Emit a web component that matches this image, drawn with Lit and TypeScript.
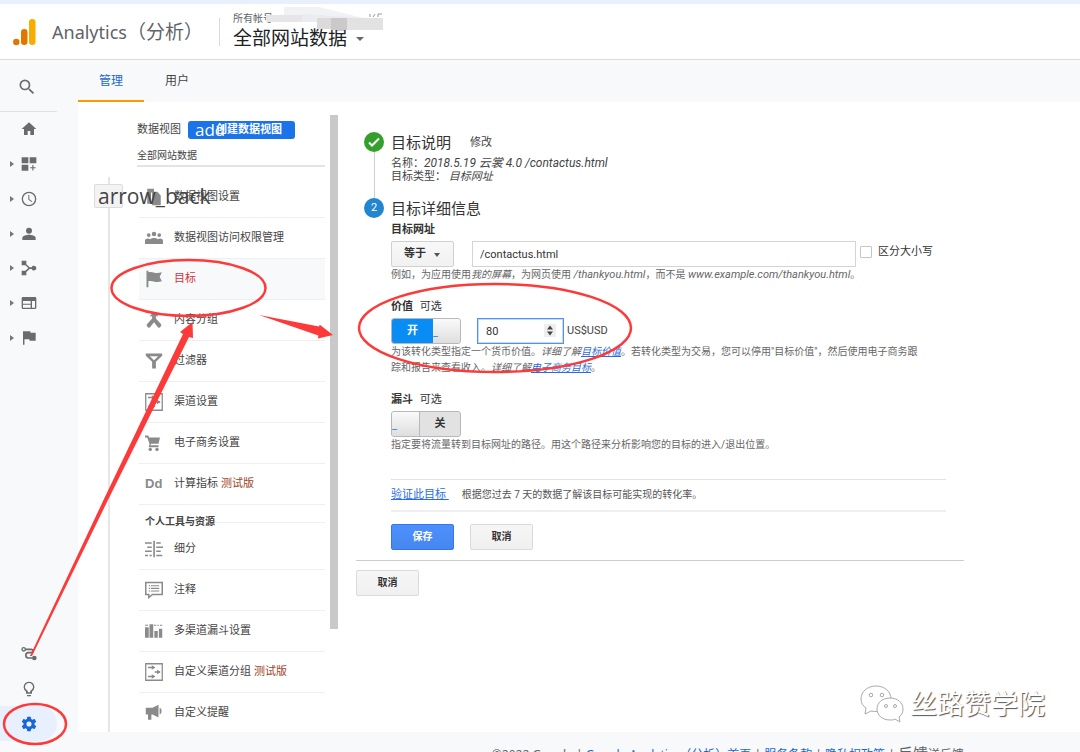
import { LitElement, html, css, svg, nothing } from "lit";
import { customElement, property } from "lit/decorators.js";

const icons: Record<string, unknown> = {
  search: svg`<path d="M15.5 14h-.79l-.28-.27A6.47 6.47 0 0 0 16 9.5 6.5 6.5 0 1 0 9.5 16c1.61 0 3.09-.59 4.23-1.57l.27.28v.79l5 4.99L20.49 19l-4.99-5zm-6 0C7.01 14 5 11.99 5 9.5S7.01 5 9.5 5 14 7.01 14 9.5 11.99 14 9.5 14z" />`,
  home: svg`<path d="M10 21v-6h4v6h5.500v-9H23L12 2 1 12h3.500v9z" />`,
  dashboard: svg`<path d="M1 2h10v9H1zM13 2h10v9H13zM1 13h10v9H1zM17 13.500h1.700v3.200h3.200v1.700h-3.200v3.200H17v-3.200h-3.200v-1.700H17z" />`,
  clock: svg`<path d="M12 1a11 11 0 1 0 0 22 11 11 0 0 0 0-22zm0 20a9 9 0 1 1 0-18 9 9 0 0 1 0 18zM12.5 6H11v7l5 3.500.8-1.300-4.300-2.900z" />`,
  person: svg`<circle cx="12" cy="7" r="4.500" /><path d="M2 21v-3c0-3.500 6.500-5 10-5s10 1.500 10 5v3z" />`,
  nodes: svg`<path d="M1 1h7v5.500l5 4.500h3a3.600 3.600 0 1 1 0 2.500h-3l-5 4.500V23H1v-7h5.500l4.500-4-4.500-4H1z" />`,
  card: svg`<path d="M21 3H3a2 2 0 0 0-2 2v14a2 2 0 0 0 2 2h18a2 2 0 0 0 2-2V5a2 2 0 0 0-2-2zM14.500 19H3v-4.200h11.500zm0-5.800H3V9h11.500zM21 19h-4.500V9H21z" />`,
  flag: svg`<path d="M14.400 4 14 2H3v20h2.200v-8h7.300l.4 2H22V4z" />`,
  route: svg`<path d="M6 5h9c4 0 4 5 0 5h-4c-5 0-5 8 0 8h6" fill="none" stroke="currentColor" stroke-width="2.500" /><circle cx="4" cy="5" r="2.500" fill="none" stroke="currentColor" stroke-width="2" /><circle cx="20" cy="18" r="3.500" />`,
  bulb: svg`<path d="M9 21h6v2H9zM12 1a8 8 0 0 0-4.500 14.600V19h9v-3.400A8 8 0 0 0 12 1zm2.700 13.200-.9.600V17h-3.600v-2.200l-.9-.600A6 6 0 1 1 14.700 14.200z" />`,
  gear: svg`<path transform="translate(-1.200 -1.200) scale(1.100)" d="M19.430 12.980c.04-.32.07-.64.07-.98s-.03-.66-.07-.98l2.110-1.650a.5.5 0 0 0 .12-.64l-2-3.460a.5.5 0 0 0-.61-.22l-2.490 1a7.300 7.300 0 0 0-1.690-.98l-.38-2.650A.49.49 0 0 0 14 2h-4a.49.49 0 0 0-.49.42l-.38 2.650c-.61.25-1.170.59-1.690.98l-2.490-1a.5.5 0 0 0-.61.22l-2 3.460a.5.5 0 0 0 .12.64l2.110 1.650c-.04.32-.07.65-.07.98s.03.66.07.98l-2.110 1.650a.5.5 0 0 0-.12.64l2 3.460c.12.22.39.3.61.22l2.490-1c.52.4 1.080.73 1.690.98l.38 2.650c.03.24.24.42.49.42h4c.25 0 .46-.18.49-.42l.38-2.650c.61-.25 1.170-.59 1.690-.98l2.490 1c.23.09.49 0 .61-.22l2-3.460a.5.5 0 0 0-.12-.64zM12 15.500a3.500 3.500 0 1 1 0-7 3.500 3.500 0 0 1 0 7z" />`,
  file: svg`<path d="M3 1h9v5h-4v15H3zM9.500 5h7L21 10v13H9.500z" />`,
  people: svg`<circle cx="5" cy="8" r="2.500" /><circle cx="12" cy="6.500" r="3" /><circle cx="19" cy="8" r="2.500" /><path d="M0 20v-4c0-3 4-4 7-2.500 2-2 8-2 10 0 3-1.500 7-.5 7 2.500v4z" />`,
  bigflag: svg`<path d="M2 1h2.500v2c6-2 8 3 18 0l-3 6 3 6c-10 3-12-2-18 0v8H2z" />`,
  merge: svg`<path d="M12 1 18 7h-3.500v3l7 7.500c1 2-2 5.500-4 4.500L12 15l-5.500 7c-2 1-5-2.500-4-4.500l7-7.500V7H6z" />`,
  filter: svg`<path d="M1 2h22v3l-8.500 8v9h-5v-9L1 5zM6.500 5.500 12 11l5.500-5.500z" fill-rule="evenodd" />`,
  channel: svg`<path d="M1 1h22v22H1zM4 6h8M13 12h7M4 18h8" fill="none" stroke="currentColor" stroke-width="1.700" /><path d="M9 3l5 3-5 3zM16 9l5 3-5 3zM9 15l5 3-5 3z" />`,
  cart: svg`<path d="M0 2h4.500l1 2.500H20L18 13H8l-.7 2H18v2.500H5L6 13 3 4.500H0z" /><circle cx="7" cy="20.500" r="2.300" /><circle cx="16" cy="20.500" r="2.300" />`,
  segment: svg`<path d="M11 1h2.200v22H11zM0 3h9v2H0zM3 8.500h6v2H3zM0 14h9v2H0zM0 19.500h4v2H0zM6 19.500h3v2H6zM15 3h6v2h-6zM15 8.500h9v2h-9zM15 14h6v2h-6zM15 19.500h8v2h-8z" />`,
  note: svg`<path d="M1 2h22v16H10l-5 4v-4H1z" fill="none" stroke="currentColor" stroke-width="2" /><path d="M5 5.500h2v1.500H5zM8 5.500h11v1.500H8zM5 9h2v1.500H5zM8 9h11v1.500H8zM5 12.500h2V14H5zM8 12.500h11V14H8z" />`,
  bars: svg`<path d="M0 7h5v14H0zM6 3h5v18H6zM12.500 12h4.500v9h-4.500zM18.500 9H23v12h-4.500zM0 3.500h4V5H0zM12 3.500h3V5h-3zM16.500 3.500h2V5h-2zM20 3.500h3V5h-3z" />`,
  horn: svg`<path d="M1 5h9l8-4v17l-8-4H8.500v7H4v-7H1zM19.500 5c3.500 1.500 3.500 7.500 0 9z" />`,
};

@customElement("ga-icon")
export class GaIcon extends LitElement {
  @property() name = "";
  static styles = css`
    :host { display: block; width: 16px; height: 16px; flex: none; }
    .glyph { display: block; width: 100%; height: 100%; fill: currentColor; }
  `;
  render() {
    return html`<svg class="glyph" viewBox="0 0 24 24" aria-hidden="true">${icons[this.name]}</svg>`;
  }
}

@customElement("ga-nav")
export class GaNav extends LitElement {
  static styles = css`
    :host { display: flex; flex-direction: column; background: #f8f9fb; }
    .search { height: 52px; width: 57px; border: 0; border-bottom: 1px solid #dfe1e5; background: none; padding: 2px 0 0 17px; color: #6b6b6b; box-sizing: border-box; }
    .search ga-icon { width: 20px; height: 20px; }
    .list { display: flex; flex-direction: column; height: 243px; justify-content: space-between; }
    .item { display: flex; align-items: center; gap: 7px; width: 57px; height: 35px; padding: 0 0 0 10px; border: 0; background: none; color: #6b6b6b; box-sizing: border-box; }
    .item.on { background: #e8f0fe; color: #1967d2; border-radius: 0 18px 18px 0; }
    .tri { width: 4px; height: 6px; flex: none; fill: #777; }
    .space { flex: 1; }
    .foot { padding-bottom: 11px; }
  `;
  private item(name: string, arrow: boolean, on = false) {
    return html`<button class="item ${on ? "on" : ""}" aria-label=${name}>
      <svg class="tri" viewBox="0 0 4 6">${arrow ? svg`<path d="M0 0l4 3-4 3z" />` : nothing}</svg>
      <ga-icon name=${name}></ga-icon>
    </button>`;
  }
  render() {
    return html`
      <button class="search" aria-label="search"><ga-icon name="search"></ga-icon></button>
      <div class="list">
        ${this.item("home", false)}
        ${["dashboard", "clock", "person", "nodes", "card", "flag"].map((n) => this.item(n, true))}
      </div>
      <div class="space"></div>
      <div class="foot">
        ${this.item("route", false)} ${this.item("bulb", false)} ${this.item("gear", false, true)}
      </div>
    `;
  }
}

interface Entry { icon?: string; label: string; beta?: boolean; on?: boolean }
const viewEntries: Entry[] = [
  { icon: "file", label: "数据视图设置" },
  { icon: "people", label: "数据视图访问权限管理" },
  { icon: "bigflag", label: "目标", on: true },
  { icon: "merge", label: "内容分组" },
  { icon: "filter", label: "过滤器" },
  { icon: "channel", label: "渠道设置" },
  { icon: "cart", label: "电子商务设置" },
  { label: "计算指标", beta: true },
];
const toolEntries: Entry[] = [
  { icon: "segment", label: "细分" },
  { icon: "note", label: "注释" },
  { icon: "bars", label: "多渠道漏斗设置" },
  { icon: "channel", label: "自定义渠道分组", beta: true },
  { icon: "horn", label: "自定义提醒" },
];

@customElement("ga-menu")
export class GaMenu extends LitElement {
  static styles = css`
    :host { display: block; padding-top: 19px; color: #444; font-size: 11px; }
    .head { display: flex; align-items: center; gap: 7px; height: 18px; }
    .add { display: flex; align-items: center; width: 107px; height: 18px; padding: 0 0 0 7px; border: 0; border-radius: 3px; background: #1a73e8; color: #fff; font: bold 11px/18px Roboto, "Noto Sans CJK SC", sans-serif; white-space: nowrap; }
    .ligature { width: 21px; font: 17px/18px "Open Sans", sans-serif; }
    .view { margin: 8px 0 10px; height: 18px; line-height: 18px; border-bottom: 2px solid #e4e4e4; font-size: 10px; }
    .row { display: flex; align-items: center; gap: 11px; height: 41px; box-sizing: border-box; margin-left: 2px; padding-left: 6px; border-bottom: 1px solid #eeeff0; color: inherit; text-decoration: none; white-space: nowrap; }
    .row ga-icon { width: 18px; height: 18px; color: #8a8a8a; }
    .row.on { background: #f8f9fb; color: #d0333d; }
    .dd { width: 18px; color: #8a8a8a; font: bold 13px/16px "Liberation Sans", sans-serif; }
    .beta { color: #a0441f; margin-left: 3px; }
    .group { display: flex; align-items: center; margin: 10px 0 0 2px; padding-left: 6px; height: 14px; font: bold 10px/14px Roboto, "Noto Sans CJK SC", sans-serif; }
    .group::after { content: ""; flex: 1; height: 1px; background: #eeeff0; }
  `;
  private row(e: Entry) {
    return html`<a class="row ${e.on ? "on" : ""}" href="#">
      ${e.icon ? html`<ga-icon name=${e.icon}></ga-icon>` : html`<span class="dd">Dd</span>`}
      <span>${e.label}${e.beta ? html`<span class="beta">测试版</span>` : nothing}</span>
    </a>`;
  }
  render() {
    return html`
      <div class="head"><span>数据视图</span><button class="add"><span class="ligature">add</span><span>创建数据视图</span></button></div>
      <div class="view">全部网站数据</div>
      ${viewEntries.map((e) => this.row(e))}
      <div class="group">个人工具与资源</div>
      ${toolEntries.map((e) => this.row(e))}
    `;
  }
}

@customElement("ga-goal")
export class GaGoal extends LitElement {
  static styles = css`
    :host { display: block; padding-top: 30px; color: #444; font: 11px/16px Roboto, "Noto Sans CJK SC", sans-serif; }
    .step { display: grid; grid-template-columns: 20px 1fr; column-gap: 7px; padding: 0 18px 0 8px; }
    .mark { display: flex; flex-direction: column; align-items: center; }
    .dot { display: flex; align-items: center; justify-content: center; width: 20px; height: 20px; flex: none; border-radius: 50%; background: #2185d0; color: #fff; font-size: 11px; }
    .dot.done { background: #33a02c; }
    .tick { width: 14px; height: 14px; fill: none; stroke: #fff; stroke-width: 2; }
    .line { flex: 1; width: 1px; background: #d0d0d0; }
    .title { display: flex; align-items: center; gap: 19px; height: 22px; margin: 0; font-size: 15px; font-weight: 400; color: #333; }
    .edit { font-size: 11px; color: #444; text-decoration: none; }
    .summary { margin: 3px 0 15px; line-height: 13px; }
    .latin { font-size: 12px; }
    .label { display: block; font-weight: bold; color: #333; }
    .label .opt { font-weight: 400; margin-left: 4px; }
    .url { margin-top: 2px; }
    .fields { display: flex; align-items: center; margin-top: 3px; }
    .pick { position: relative; width: 63px; margin-right: 18px; }
    .pick select { display: block; width: 100%; height: 26px; padding: 0 22px 0 12px; appearance: none; border: 1px solid #d0d0d0; border-radius: 2px; background: linear-gradient(#f8f8f8, #f1f1f1); color: #333; font: bold 11px/16px Roboto, "Noto Sans CJK SC", sans-serif; }
    .caret { position: absolute; right: 14px; top: 12px; width: 6px; height: 4px; fill: #555; pointer-events: none; }
    .path { flex: 1; min-width: 0; height: 26px; box-sizing: border-box; border: 1px solid #d4d4d4; padding: 0 7px; color: #333; font: 11px/16px Roboto, "Noto Sans CJK SC", sans-serif; }
    .case { display: flex; align-items: center; gap: 6px; margin: 0 13px 4px 4px; color: #333; }
    .case input { appearance: none; width: 12px; height: 12px; margin: 0; border: 1px solid #c6c6c6; border-radius: 1px; background: #fff; }
    .hint { margin: 0; font-size: 10px; color: #666; white-space: nowrap; }
    .hint .latin { font-size: 11px; }
    a { color: #2a6ce0; }
    .value, .funnel { margin-top: 16px; }
    .switch { display: flex; width: 70px; height: 26px; box-sizing: border-box; border: 1px solid #b8b8b8; border-radius: 3px; overflow: hidden; position: relative; background: #e2e2e2; font-weight: bold; color: #333; margin-right: 16px; }
    .switch input { position: absolute; inset: 0; margin: 0; opacity: 0; }
    .side { flex: 1; display: flex; align-items: center; justify-content: center; }
    .knob { width: 27px; display: flex; align-items: flex-end; background: linear-gradient(#fafafa, #dedede); border-right: 1px solid #b8b8b8; color: #2a8be8; font-weight: 400; line-height: 20px; }
    .switch.yes .side { background: #0a8cf5; color: #fff; }
    .switch.yes .knob { border-right: 0; }
    .amount { position: relative; width: 87px; margin-right: 3px; }
    .amount input { display: block; width: 100%; height: 26px; box-sizing: border-box; border: 1px solid #4d90fe; outline: 1px solid #c4dafc; outline-offset: -2px; padding: 0 8px; appearance: textfield; color: #333; font: 11px/16px Roboto, sans-serif; }
    .amount input::-webkit-inner-spin-button { display: none; }
    .spin { position: absolute; right: 8px; top: 6px; width: 12px; height: 13px; background: #eee; fill: #444; pointer-events: none; }
    .verify { display: flex; align-items: center; gap: 13px; height: 30px; margin-top: 26px; border-top: 1px solid #e2e2e2; border-bottom: 2px solid #efefef; font-size: 10px; color: #555; }
    .verify a { font-size: 11px; white-space: pre; }
    .actions { display: flex; gap: 16px; padding: 12px 0 10px; }
    .btn { width: 63px; height: 26px; border: 1px solid #dadada; border-radius: 2px; background: linear-gradient(#f6f6f6, #f0f0f0); color: #333; font: bold 10px/16px Roboto, "Noto Sans CJK SC", sans-serif; }
    .btn.main { border-color: #3079ed; background: linear-gradient(#4d90fe, #4787ed); color: #fff; }
    .end { padding-top: 9px; border-top: 1px solid #ccc; }
  `;
  render() {
    return html`
      <section class="step">
        <div class="mark"><span class="dot done"><svg class="tick" viewBox="0 0 14 14"><path d="M2 7.500l3 3 7-7" /></svg></span><span class="line"></span></div>
        <div>
          <h2 class="title">目标说明<a class="edit" href="#">修改</a></h2>
          <div class="summary">名称：<i class="latin">2018.5.19 云裳 4.0 /contactus.html</i><br />目标类型： <i>目标网址</i></div>
        </div>
      </section>
      <section class="step">
        <div class="mark"><span class="dot">2</span></div>
        <div>
          <h2 class="title">目标详细信息</h2>
          <label class="label url" for="path">目标网址</label>
          <div class="fields">
            <div class="pick">
              <select aria-label="匹配方式"><option>等于</option></select>
              <svg class="caret" viewBox="0 0 6 4"><path d="M0 0h6L3 4z" /></svg>
            </div>
            <input class="path" id="path" type="text" value="/contactus.html" />
            <label class="case"><input type="checkbox" />区分大小写</label>
          </div>
          <p class="hint">例如，为应用使用<i>我的屏幕</i>，为网页使用 <i class="latin">/thankyou.html</i>，而不是 <i class="latin">www.example.com/thankyou.html</i>。</p>
          <label class="label value" for="amount">价值 <span class="opt">可选</span></label>
          <div class="fields">
            <label class="switch yes"><input type="checkbox" checked aria-label="价值" /><span class="side">开</span><span class="knob">_</span></label>
            <div class="amount">
              <input id="amount" type="number" value="80" />
              <svg class="spin" viewBox="0 0 12 13"><path d="M3 5.500h6L6 1.500zM3 7.500h6l-3 4z" /></svg>
            </div>
            <span>US$USD</span>
          </div>
          <p class="hint">为该转化类型指定一个货币价值。<i>详细了解<a href="#">目标价值</a></i>。若转化类型为交易，您可以停用"目标价值"，然后使用电子商务跟<br />踪和报告来查看收入。<i>详细了解<a href="#">电子商务目标</a></i>。</p>
          <label class="label funnel" for="funnel">漏斗 <span class="opt">可选</span></label>
          <div class="fields">
            <label class="switch"><input id="funnel" type="checkbox" /><span class="knob">_</span><span class="side">关</span></label>
          </div>
          <p class="hint">指定要将流量转到目标网址的路径。用这个路径来分析影响您的目标的进入/退出位置。</p>
          <div class="verify"><a href="#">验证此目标 </a><span>根据您过去 7 天的数据了解该目标可能实现的转化率。</span></div>
          <div class="actions"><button class="btn main">保存</button><button class="btn">取消</button></div>
        </div>
      </section>
      <div class="end"><button class="btn">取消</button></div>
    `;
  }
}

@customElement("app-root")
export class AppRoot extends LitElement {
  static styles = css`
    :host { display: flex; flex-direction: column; height: 100vh; overflow: hidden; position: relative; background: #f8f9fb; color: #444; font: 11px/16px Roboto, "Noto Sans CJK SC", sans-serif; }
    .top { display: flex; align-items: center; height: 60px; flex: none; box-sizing: border-box; border-top: 4px solid #e8f0fe; border-bottom: 1px solid #dadce0; background: #fff; padding-left: 12px; }
    .logo { width: 24px; height: 28px; margin-right: 16px; }
    .brand { width: 167px; font: 18px/28px "Noto Sans", "Noto Sans CJK SC", sans-serif; color: #5f6368; white-space: nowrap; }
    .han { font-size: 19px; }
    .account { display: flex; flex-direction: column; padding-left: 13px; border-left: 1px solid #dadce0; height: 28px; justify-content: center; position: relative; }
    .trail { font-size: 10px; line-height: 14px; color: #5f6368; }
    .current { display: flex; align-items: center; gap: 9px; padding: 0; border: 0; background: none; color: #202124; font: 19px/26px Roboto, "Noto Sans CJK SC", sans-serif; }
    .down { width: 8px; height: 4px; fill: #666; }
    .mosaic { position: absolute; left: 44px; top: -13px; width: 120px; height: 26px; }
    .body { display: grid; grid-template-columns: 78px minmax(0, 1fr); flex: 1; min-height: 0; }
    .main { display: flex; flex-direction: column; min-height: 0; }
    .tabs { display: flex; height: 42px; flex: none; }
    .tab { width: 66px; box-sizing: border-box; padding-top: 13px; text-align: center; text-decoration: none; color: #444; font-size: 12px; border-bottom: 2px solid transparent; }
    .tab.on { color: #1967d2; border-color: #ff9800; }
    .panel { display: flex; flex: 1; min-height: 0; overflow: hidden; background: #fff; }
    .rail { width: 59px; flex: none; position: relative; padding-top: 75px; box-sizing: border-box; }
    .rail::before { content: ""; display: block; height: 100%; width: 2px; margin-left: 30px; background: #e6e6e6; }
    .back { position: absolute; z-index: 1; left: 16px; top: 82px; width: 29px; height: 24px; padding: 0 0 0 3px; border: 1px solid #dcdcdc; border-radius: 2px; background: #f3f3f3; color: #444; font: 21px/22px "Open Sans", sans-serif; text-align: left; white-space: nowrap; }
    ga-menu { width: 188px; flex: none; }
    .scroll { width: 8px; height: 514px; margin: 13px 18px 0 5px; flex: none; background: #c9c9c9; }
    ga-goal { flex: 1; min-width: 0; max-width: 608px; }
    .legal { flex: none; height: 20px; box-sizing: border-box; padding: 13px 116px 0 0; overflow: hidden; text-align: right; white-space: nowrap; color: #5f6368; font: 12px/16px "Noto Sans", "Noto Sans CJK SC", sans-serif; }
    .legal a { color: #1967d2; text-decoration: none; }
    .big { font-size: 15px; }
    .marks { position: absolute; left: 0; top: 0; width: 1080px; height: 752px; fill: #fd3a3a; pointer-events: none; }
    .ring { fill: none; stroke: #fd3a3a; stroke-width: 2.500; }
    .water { position: absolute; right: 35px; bottom: 29px; display: flex; align-items: center; gap: 5px; color: #fff; font: 27px/40px "Noto Sans CJK SC", sans-serif; text-shadow: 1px 1px 1px #555; pointer-events: none; }
    .chat { width: 46px; height: 40px; fill: #fff; stroke: #aaa; stroke-width: 1; }
  `;
  render() {
    return html`
      <header class="top">
        <svg class="logo" viewBox="0 0 24 28"><rect x="17" y="1" width="6.500" height="26" rx="3.200" fill="#f9ab00" /><rect x="9" y="11" width="6.500" height="16" rx="3.200" fill="#e37400" /><circle cx="4.300" cy="24" r="3.200" fill="#e37400" /></svg>
        <span class="brand">Analytics<span class="han">（分析）</span></span>
        <div class="account">
          <span class="trail">所有帐号 &gt; 20</span>
          <button class="current">全部网站数据<svg class="down" viewBox="0 0 8 4"><path d="M0 0h8L4 4z" /></svg></button>
          <svg class="mosaic" viewBox="0 0 120 26"><path d="M20 2h35l48 12H20z" fill="#f1f2f5" /><path d="M2 10h58v7H2z" fill="#e6e6e8" /><path d="M38 9l65 4v4H38z" fill="#ebecef" /><path d="M53 13h14v11H53z" fill="#dcdadb" /><path d="M67 13h16v12H67z" fill="#cbc9ca" /><path d="M83 13h36v12H83z" fill="#e2e2e3" /><path d="M106 12v-3M109 12l2-3M114 12v-3h4" stroke="#999" fill="none" /></svg>
        </div>
      </header>
      <div class="body">
        <ga-nav></ga-nav>
        <main class="main">
          <nav class="tabs"><a class="tab on" href="#">管理</a><a class="tab" href="#">用户</a></nav>
          <div class="panel">
            <div class="rail"><button class="back">arrow_back</button></div>
            <ga-menu></ga-menu>
            <div class="scroll"></div>
            <ga-goal></ga-goal>
          </div>
          <footer class="legal">©2022 Google | <a href="#">Google Analytics（分析）首页</a> | <a href="#">服务条款</a> | <a href="#">隐私权政策</a> | <span class="big">反馈</span>送反馈</footer>
        </main>
      </div>
      <div class="water">
        <svg class="chat" viewBox="0 0 46 40"><path d="M17 3C8 3 2 9 2 16c0 4 2 7 5 9l-1 6 6-3c9 2 20-2 20-12C32 9 26 3 17 3z" /><path d="M31 15c-8 0-13 5-13 11s5 11 13 11c2 0 4 0 5-1l5 3-1-5c3-2 4-5 4-8 0-6-5-11-13-11z" /><circle cx="12" cy="12" r="1.800" /><circle cx="23" cy="12" r="1.800" /><circle cx="27" cy="23" r="1.500" /><circle cx="36" cy="23" r="1.500" /></svg>
        <span>丝路赞学院</span>
      </div>
      <svg class="marks" viewBox="0 0 1080 752" aria-hidden="true">
        <ellipse class="ring" cx="188.500" cy="288" rx="77" ry="28" />
        <ellipse class="ring" cx="495" cy="328" rx="136" ry="44" />
        <ellipse class="ring" cx="35" cy="724" rx="31" ry="20" />
        <path d="M259 315l60 11.500.8-1.800L333 335l-15 3.500.3-3z" />
        <path d="M30 656L103.500 500 183 334l-3-2 12.500-10 .5 16-4-1L107.500 501 32 656z" />
      </svg>
    `;
  }
}
